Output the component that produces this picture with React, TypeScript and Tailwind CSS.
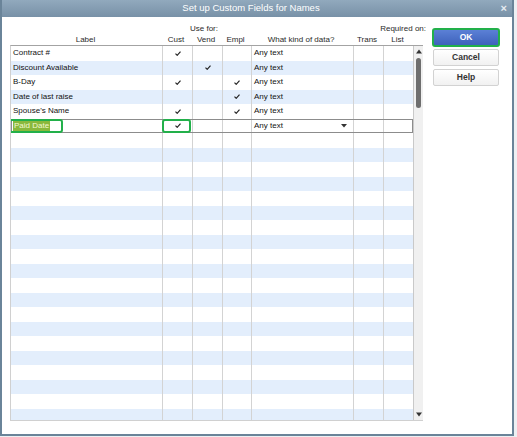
import React from "react";

// "Set up Custom Fields for Names" dialog: striped grid of custom fields,
// OK / Cancel / Help on the right.

const COLS = [151, 30, 30, 29, 102, 30, 31];
const TOTAL_ROWS = 26;

type Field = { label: string; cust?: boolean; vend?: boolean; empl?: boolean };

const FIELDS: Field[] = [
  { label: "Contract #", cust: true },
  { label: "Discount Available", vend: true },
  { label: "B-Day", cust: true, empl: true },
  { label: "Date of last raise", empl: true },
  { label: "Spouse's Name", cust: true, empl: true },
  { label: "Paid Date", cust: true },
];

const font = { fontFamily: '"Liberation Sans", Arial, sans-serif' };

function Check() {
  return (
    <svg width="6" height="5" viewBox="0 0 6 5" aria-hidden>
      <path d="M0.5 2.6 L2.2 4.3 L5.5 0.7" fill="none" stroke="#222" strokeWidth="1.2" />
    </svg>
  );
}

function Cell({ i, children, className = "" }: { i: number; children?: React.ReactNode; className?: string }) {
  return (
    <div
      className={`flex h-full shrink-0 items-center ${i > 0 ? "border-l border-[#d3d3d3]" : ""} ${className}`}
      style={{ width: COLS[i] }}
    >
      {children}
    </div>
  );
}

function Row({ index }: { index: number }) {
  const f = FIELDS[index];
  const selected = index === 5;
  const stripe = index % 2 === 1 && !selected ? "bg-[#e3eefc]" : "bg-white";
  return (
    <div className={`relative flex h-[14.5px] ${stripe}`}>
      <Cell i={0} className="pl-[2px]">
        {f && !selected && <span>{f.label}</span>}
        {selected && (
          <span className="bg-[#8ab83c] px-[1px] leading-[10px] text-[#f4f9d2]">Paid Date</span>
        )}
      </Cell>
      <Cell i={1} className="justify-center">{f?.cust && <Check />}</Cell>
      <Cell i={2} className="justify-center">{f?.vend && <Check />}</Cell>
      <Cell i={3} className="justify-center">{f?.empl && <Check />}</Cell>
      <Cell i={4} className="justify-between pl-[2px] pr-[6px]">
        {f && <span>Any text</span>}
        {selected && (
          <svg width="6" height="4" viewBox="0 0 6 4" aria-hidden>
            <path d="M0 0 H6 L3 3.5 Z" fill="#333" />
          </svg>
        )}
      </Cell>
      <Cell i={5} />
      <Cell i={6} />
      {selected && (
        <>
          <div className="pointer-events-none absolute inset-0 border border-[#8c8c8c]" />
          <div className="pointer-events-none absolute left-[-2px] top-0 h-[14.5px] w-[54px] rounded-[3px] border-2 border-[#22b04a]" />
          <div className="pointer-events-none absolute left-[151px] top-0 h-[14.5px] w-[29px] rounded-[3px] border-2 border-[#22b04a]" />
        </>
      )}
    </div>
  );
}

export default function App() {
  return (
    <div className="h-[437px] w-[517px] overflow-hidden bg-[#edf0f3]" style={font}>
      <div className="flex h-[436px] w-[514px] flex-col border-x-2 border-b-2 border-[#6a8499] bg-white">
        <div className="relative flex h-[17px] shrink-0 items-center justify-center bg-gradient-to-b from-[#91a9bd] to-[#7891a7] pr-[12px] text-[9.5px] text-white">
          Set up Custom Fields for Names
          <span className="absolute right-[5px] top-[1px] text-[11px] font-bold leading-[14px] text-[#e6ecf1]">×</span>
        </div>

        <div className="flex pl-[8px] text-[8px] text-[#111]">
          <div className="w-[413px]">
            <div className="pt-[6px] text-[#2a2a2a]">
              <div className="relative flex h-[11px] items-center">
                <span className="absolute left-[180px]">Use for:</span>
                <span className="absolute right-[-3px]">Required on:</span>
              </div>
              <div className="flex h-[11px] items-center">
                {["Label", "Cust", "Vend", "Empl", "What kind of data?", "Trans", "List"].map((h, i) => (
                  <div key={h} className="shrink-0 text-center" style={{ width: COLS[i] }}>
                    {h}
                  </div>
                ))}
              </div>
            </div>

            <div className="flex h-[376px] border-t border-b border-l border-t-[#a3a3a3] border-b-[#d0d0d0] border-l-[#d0d0d0]">
              <div className="w-[403px] overflow-hidden">
                {Array.from({ length: TOTAL_ROWS }, (_, i) => (
                  <Row key={i} index={i} />
                ))}
              </div>
              <div className="flex w-[10px] shrink-0 flex-col items-center border-l border-[#c9c9c9] bg-[#f0f0f0] pb-[3px] pt-[3px]">
                <svg width="6" height="5" viewBox="0 0 6 5" aria-hidden>
                  <path d="M0 4.5 H6 L3 0.5 Z" fill="#333" />
                </svg>
                <div className="mt-[4px] h-[50px] w-[5px] rounded-full bg-[#6e6e6e]" />
                <div className="grow" />
                <svg width="6" height="5" viewBox="0 0 6 5" aria-hidden>
                  <path d="M0 0.5 H6 L3 4.5 Z" fill="#333" />
                </svg>
              </div>
            </div>
          </div>

          <div className="ml-[9px] flex w-[68px] flex-col gap-[2px] pt-[11px] text-[8.5px]">
            <button className="flex h-[19px] items-center justify-center rounded-[3px] border-2 border-[#22b04a] bg-gradient-to-b from-[#5b80d6] to-[#3e62bb] font-bold text-white">
              OK
            </button>
            <button className="mx-[1px] flex h-[17px] items-center justify-center rounded-[2px] border border-[#d2d2d2] bg-gradient-to-b from-white to-[#f1f1f1] font-bold text-[#333]">
              Cancel
            </button>
            <button className="mx-[1px] mt-[1px] flex h-[17px] items-center justify-center rounded-[2px] border border-[#d2d2d2] bg-gradient-to-b from-white to-[#f1f1f1] font-bold text-[#333]">
              Help
            </button>
          </div>
        </div>
      </div>
    </div>
  );
}
